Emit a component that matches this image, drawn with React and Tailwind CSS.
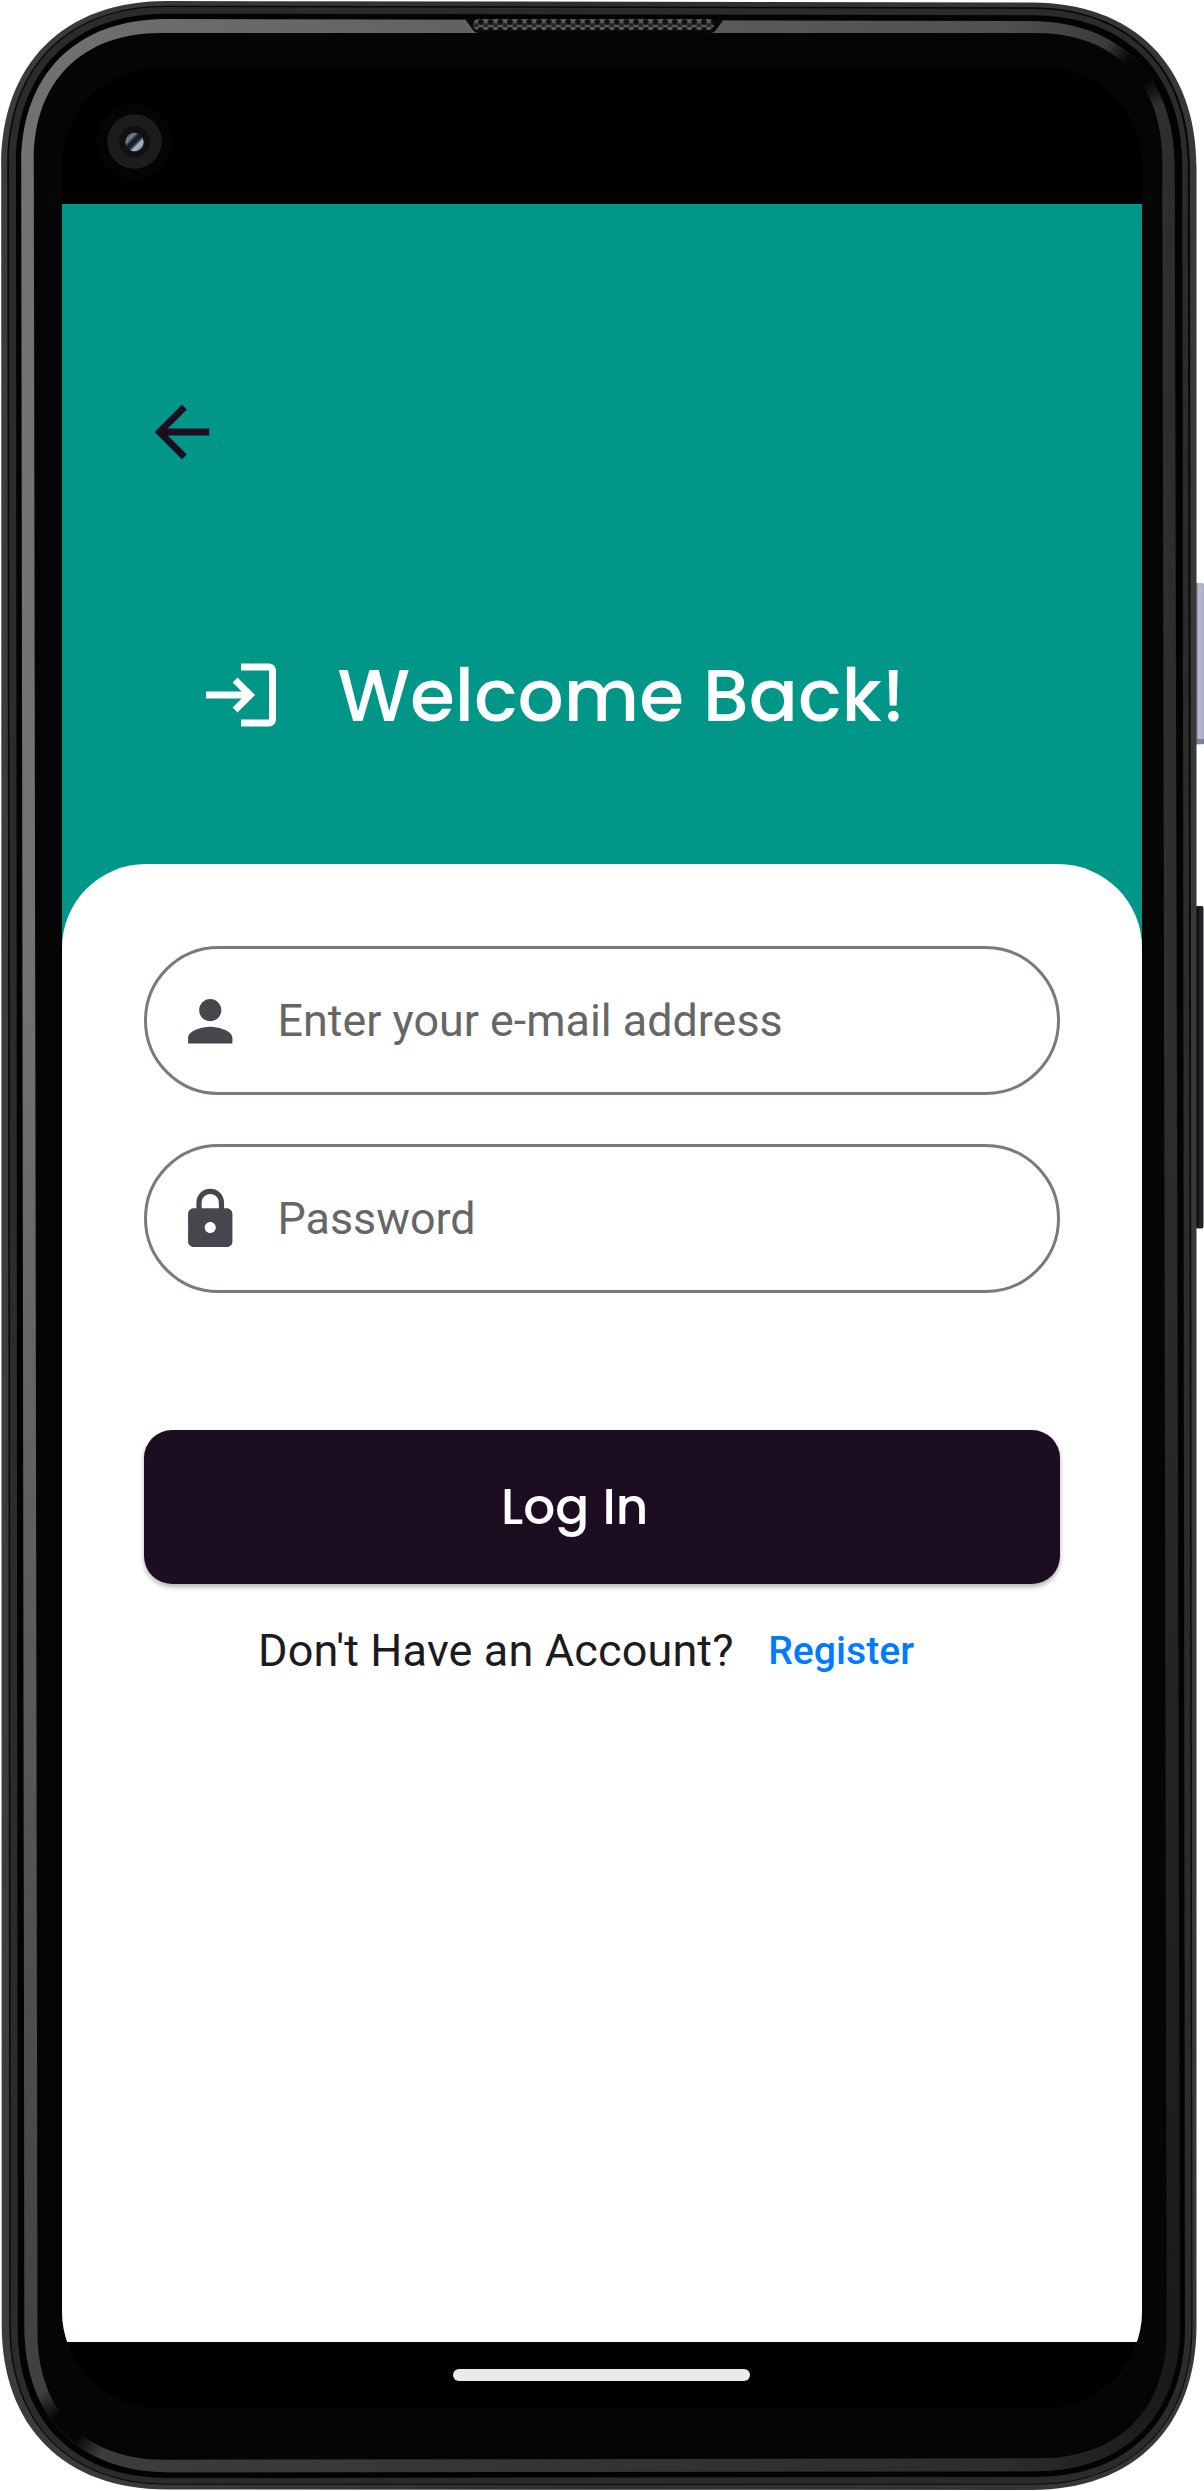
import React from "react";

/* Builds a closed outline with smooth corners. Each edge may lean slightly. */
function outline({ l, r, t, b, d }) {
  const k = 0.62;
  const h = d * (1 - k);
  const [l1, l2] = l;
  const [r1, r2] = r;
  const [t1, t2] = t;
  const [b1, b2] = b;
  return [
    `M${l1 + d} ${t1}`,
    `L${r1 - d} ${t2}`,
    `C${r1 - h} ${t2} ${r1} ${t2 + h} ${r1} ${t2 + d}`,
    `L${r2} ${b2 - d}`,
    `C${r2} ${b2 - h} ${r2 - h} ${b2} ${r2 - d} ${b2}`,
    `L${l2 + d} ${b1}`,
    `C${l2 + h} ${b1} ${l2} ${b1 - h} ${l2} ${b1 - d}`,
    `L${l1} ${t1 + d}`,
    `C${l1} ${t1 + h} ${l1 + h} ${t1} ${l1 + d} ${t1}`,
    "Z",
  ].join(" ");
}

const RINGS = [
  { fill: "url(#rim)", l: [1.2, 1.7], r: [1196.5, 1196.5], t: [1, 2.5], b: [2489.5, 2490], d: 165 },
  { fill: "#080808", l: [7.3, 9.3], r: [1190, 1192.5], t: [5.7, 7.3], b: [2484.7, 2484.7], d: 159 },
  { fill: "#2b2b2b", l: [9, 10.8], r: [1187.8, 1191.3], t: [7, 8.7], b: [2483.7, 2483.7], d: 157 },
  { fill: "#030303", l: [16, 17.7], r: [1182.3, 1185], t: [13.7, 15.3], b: [2478, 2477], d: 150 },
  { fill: "url(#bevel)", l: [21.2, 24.5], r: [1174.7, 1180], t: [19, 21], b: [2472.3, 2471.3], d: 145 },
];

function Bezel() {
  const bevel = outline(RINGS[4]);
  return (
    <svg className="absolute inset-0" width="1204" height="2491" viewBox="0 0 1204 2491" aria-hidden="true">
      <defs>
        <linearGradient id="rim" x1="0" y1="0" x2="1" y2="0">
          <stop offset="0" stopColor="#3c3c3c" />
          <stop offset="0.5" stopColor="#2e2e2e" />
          <stop offset="1" stopColor="#383838" />
        </linearGradient>
        <linearGradient id="bevel" x1="0" y1="0" x2="1" y2="0">
          <stop offset="0" stopColor="#727272" />
          <stop offset="0.1" stopColor="#6c6c6c" />
          <stop offset="0.85" stopColor="#505050" />
          <stop offset="0.97" stopColor="#323232" />
          <stop offset="1" stopColor="#2c2c2c" />
        </linearGradient>
        <linearGradient id="fade" gradientUnits="userSpaceOnUse" x1="0" y1="1000" x2="0" y2="2440">
          <stop offset="0" stopColor="#000" stopOpacity="0" />
          <stop offset="1" stopColor="#000" stopOpacity="0.45" />
        </linearGradient>
        <radialGradient id="shade">
          <stop offset="0.35" stopColor="#050505" />
          <stop offset="1" stopColor="#050505" stopOpacity="0" />
        </radialGradient>
        <clipPath id="bevelClip">
          <path d={bevel} />
        </clipPath>
        <pattern id="mesh" width="9.7" height="8" patternUnits="userSpaceOnUse" x="476" y="19">
          <rect width="9.7" height="8" fill="#6b6b6b" />
          <circle cx="4.85" cy="3" r="2.9" fill="#141414" />
          <circle cx="0" cy="6.6" r="2.6" fill="#2c2c2c" />
          <circle cx="9.7" cy="6.6" r="2.6" fill="#2c2c2c" />
        </pattern>
        <linearGradient id="lens" x1="0" y1="0" x2="1" y2="1">
          <stop offset="0" stopColor="#3d3f55" />
          <stop offset="0.28" stopColor="#77809a" />
          <stop offset="0.42" stopColor="#15171f" />
          <stop offset="0.56" stopColor="#20242e" />
          <stop offset="0.68" stopColor="#a9b9cf" />
          <stop offset="1" stopColor="#66748c" />
        </linearGradient>
        <linearGradient id="power" x1="0" y1="0" x2="1" y2="0">
          <stop offset="0.2" stopColor="#7f809a" />
          <stop offset="0.5" stopColor="#b9bad2" />
          <stop offset="1" stopColor="#adaec8" />
        </linearGradient>
      </defs>

      <rect x="1194" y="583" width="10" height="161.500" rx="2" fill="url(#power)" />
      <rect x="1196" y="739" width="8" height="5" fill="#5b5c7c" opacity="0.6" />
      <rect x="1194" y="906" width="9.500" height="322.500" rx="2" fill="#232327" />
      <rect x="1196.500" y="908" width="2" height="319" fill="#0a0a0c" />

      {RINGS.map((ring) => (
        <path key={ring.d} d={outline(ring)} fill={ring.fill} />
      ))}
      <path d={bevel} fill="url(#fade)" />
      <g clipPath="url(#bevelClip)">
        <ellipse cx="1142" cy="68" rx="42" ry="42" fill="url(#shade)" />
        <ellipse cx="64" cy="2430" rx="44" ry="44" fill="url(#shade)" />
      </g>
      <path
        d={outline({ l: [33.8, 37.5], r: [1162.3, 1166.7], t: [33, 33], b: [2459.7, 2458.3], d: 127 })}
        fill="#050505"
      />

      <path d="M465 19H724L716 30Q714 33 710 33H479Q475 33 473 30Z" fill="#080808" />
      <rect x="473" y="19" width="241" height="11" rx="5.500" fill="url(#mesh)" />
      <rect x="473" y="19" width="241" height="11" rx="5.500" fill="#000" opacity="0.15" />
    </svg>
  );
}

function Camera() {
  return (
    <svg className="ml-[35px] mt-[36px] shrink-0" width="76" height="76" viewBox="0 0 76 76" aria-hidden="true">
      <circle cx="37.500" cy="37.500" r="37.500" fill="#040404" />
      <circle cx="37.500" cy="37.500" r="27.300" fill="#1c1c1c" />
      <circle cx="37.500" cy="37.500" r="15.500" fill="#111111" />
      <circle cx="37.500" cy="38" r="9.200" fill="url(#lens)" />
    </svg>
  );
}

function Icon({ path, className }) {
  return (
    <svg viewBox="0 0 24 24" fill="currentColor" className={className} aria-hidden="true">
      <path d={path} />
    </svg>
  );
}

const ARROW_BACK = "M20 11H7.83l5.59-5.59L12 4l-8 8 8 8 1.41-1.41L7.83 13H20v-2z";
const LOGIN =
  "M11 7 9.6 8.4l2.6 2.6H2v2h10.200l-2.6 2.6L11 17l5-5-5-5zm9 12h-8v2h8c1.100 0 2-.9 2-2V5c0-1.100-.9-2-2-2h-8v2h8v14z";
const PERSON =
  "M12 12c2.210 0 4-1.790 4-4s-1.790-4-4-4-4 1.790-4 4 1.790 4 4 4zm0 2c-2.670 0-8 1.340-8 4v2h16v-2c0-2.660-5.330-4-8-4z";
const LOCK =
  "M18 8h-1V6c0-2.760-2.240-5-5-5S7 3.240 7 6v2H6c-1.100 0-2 .9-2 2v10c0 1.100.9 2 2 2h12c1.100 0 2-.9 2-2V10c0-1.100-.9-2-2-2zm-6 9c-1.100 0-2-.9-2-2s.9-2 2-2 2 .9 2 2-.9 2-2 2zm3.100-9H8.900V6c0-1.710 1.390-3.100 3.100-3.100 1.710 0 3.100 1.390 3.100 3.100v2z";

function Field({ icon, label }) {
  return (
    <div className="flex h-[149px] items-center rounded-full border-[3px] border-[#7c7781] pl-[30px]">
      <Icon path={icon} className="mt-[1px] size-[66.500px] text-[#49454f]" />
      <span className="ml-[34px] text-[44.850px] leading-[60px] text-[#666666]">{label}</span>
    </div>
  );
}

export default function App() {
  return (
    <main className="relative h-[2491px] w-[1204px] overflow-hidden bg-white font-['Roboto',sans-serif]">
      <Bezel />
      <div className="relative ml-[62px] pt-[68px]">
        <div className="flex h-[2340px] w-[1080px] flex-col overflow-hidden rounded-[97px] bg-black">
          <div className="flex h-[136px] shrink-0">
            <Camera />
          </div>

          <div className="flex flex-1 flex-col bg-[#009688]">
            <header className="h-[660px] shrink-0 pt-[186.500px]">
              <Icon path={ARROW_BACK} className="ml-[79px] size-[82px] text-[#1c0d20]" />
              <div className="mt-[180px] flex h-[84px] items-center pl-[137px]">
                <Icon path={LOGIN} className="size-[84px] shrink-0 text-white" />
                <h1 className="ml-[54.500px] whitespace-nowrap pt-[3px] font-['Poppins','Inter',sans-serif] text-[72.600px] font-medium leading-[84px] text-white">
                  Welcome Back!
                </h1>
              </div>
            </header>

            <section className="flex-1 rounded-t-[84px] bg-white pl-[82px] pr-[82.500px] pt-[82px]">
              <div className="flex flex-col gap-[49px]">
                <Field icon={PERSON} label="Enter your e-mail address" />
                <Field icon={LOCK} label="Password" />
              </div>
              <button className="mt-[137px] flex h-[154px] w-full items-center rounded-[28px] bg-[#1c0d20] pl-[357px] shadow-[0_3px_5px_rgba(0,0,0,0.3)]">
                <span className="whitespace-nowrap font-['Poppins','Inter',sans-serif] text-[50.200px] font-medium leading-[60px] text-white">
                  Log In
                </span>
              </button>
              <p className="mt-[36.500px] flex items-center pl-[114px] text-[45px] leading-[60px] text-[#1d1b20]">
                <span className="tracking-[0.14px]">Don't Have an Account?</span>
                <a className="ml-[34.500px] text-[39.200px] font-medium text-[#007bff]">Register</a>
              </p>
            </section>
          </div>

          <div className="flex h-[66px] shrink-0 justify-center pr-[1px] pt-[27px]">
            <div className="h-[11.500px] w-[297px] rounded-full bg-[#ebebeb]" />
          </div>
        </div>
      </div>
    </main>
  );
}
